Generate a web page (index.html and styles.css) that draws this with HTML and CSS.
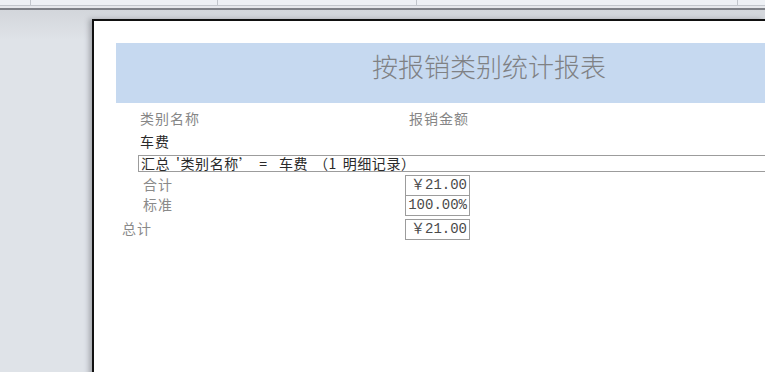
FILE: index.html
```html
<!DOCTYPE html>
<html lang="zh-CN">
<head>
<meta charset="utf-8">
<title>按报销类别统计报表</title>
<link rel="stylesheet" href="styles.css">
</head>
<body>
<div class="chrome">
  <div class="tabs">
    <span class="tab tab-a"></span>
    <span class="tab tab-b"></span>
    <span class="tab tab-c"></span>
    <span class="tab tab-d"></span>
    <span class="tab tab-e"></span>
  </div>
</div>
<div class="workspace">
  <div class="page">
    <div class="band"><h1 class="title">按报销类别统计报表</h1></div>
    <div class="heads">
      <span class="head-name">类别名称</span>
      <span class="head-amount">报销金额</span>
    </div>
    <div class="group">车费</div>
    <div class="summary">汇总 '类别名称’ =&nbsp; 车费 （1 明细记录）</div>
    <div class="row">
      <span class="lbl lbl-sub">合计</span>
      <span class="val">￥21.00</span>
    </div>
    <div class="row row-joined">
      <span class="lbl lbl-sub">标准</span>
      <span class="val">100.00%</span>
    </div>
    <div class="row row-total">
      <span class="lbl lbl-total">总计</span>
      <span class="val">￥21.00</span>
    </div>
  </div>
</div>
</body>
</html>
```
FILE: styles.css
```css
html, body {
  margin: 0;
  height: 100%;
  overflow: hidden;
}

body {
  background: #dfe3e8;
  font-family: "Noto Sans CJK SC", "Noto Sans", sans-serif;
}

/* window chrome above the print preview */
.chrome {
  height: 10px;
  background: linear-gradient(#eef1f5 0 5px, #c3c7cd 5px 6px, #e6e8ec 6px 8px, #7e8187 8px 10px);
}

.tabs {
  display: flex;
  height: 5px;
}

.tab {
  border-right: 1px solid #c2c6cc;
}

.tab-a { width: 30px; }
.tab-b { width: 186px; }
.tab-c { width: 198px; }
.tab-d { width: 320px; }
.tab-e { flex: 1; border-right: none; }

.workspace {
  padding: 9px 0 0 92px;
  background: linear-gradient(#d3d6db, #dfe3e8 30px);
  height: 100%;
  box-sizing: border-box;
}

.page {
  background: #fff;
  border-top: 2px solid #111;
  border-left: 2px solid #111;
  height: 100%;
  padding: 22px 0 0 22px;
  box-sizing: border-box;
  box-shadow: -3px 0 5px rgba(60, 64, 72, 0.35);
}

.band {
  height: 60px;
  background: #c6d9f0;
  padding: 10px 0 0 256px;
  box-sizing: border-box;
}

.title {
  margin: 0;
  font-size: 26px;
  line-height: 26px;
  font-weight: 300;
  color: #7f8184;
  white-space: nowrap;
}

.heads {
  display: flex;
  height: 20px;
  margin-top: 5px;
  padding-left: 24px;
  font-size: 14px;
  line-height: 20px;
  letter-spacing: 1px;
  color: #868686;
}

.head-name { width: 269px; }

.group {
  height: 20px;
  margin-top: 3px;
  padding-left: 24px;
  font-size: 14px;
  line-height: 20px;
  letter-spacing: 1px;
  color: #2a2a2a;
}

.summary {
  height: 17px;
  margin: 4px 0 0 22px;
  border: 1px solid #9c9c9c;
  border-right: none;
  box-sizing: border-box;
  padding-left: 2px;
  font-size: 14px;
  line-height: 15px;
  letter-spacing: 0.6px;
  word-spacing: 2px;
  color: #2a2a2a;
  white-space: nowrap;
}

.row {
  display: flex;
  height: 21px;
  margin-top: 3px;
  font-size: 14px;
  line-height: 19px;
}

.row-joined { margin-top: -1px; }
.row-total { margin-top: 3px; }

.lbl {
  width: 289px;
  color: #8a8a8a;
  letter-spacing: 1px;
  box-sizing: border-box;
}

.lbl-sub { padding-left: 27px; }
.lbl-total { padding-left: 6px; }

.val {
  width: 65px;
  border: 1px solid #9c9c9c;
  box-sizing: border-box;
  padding-right: 2px;
  text-align: right;
  color: #4a4a4a;
  font-family: "Liberation Mono", "Noto Sans CJK SC", monospace;
  font-size: 14px;
}
```
